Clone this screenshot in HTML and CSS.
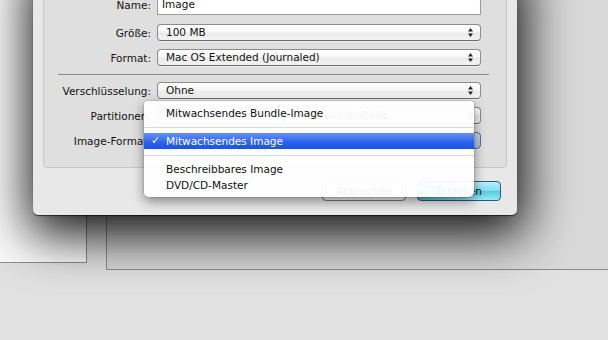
FILE: index.html
```html
<!DOCTYPE html>
<html lang="de">
<head>
<meta charset="utf-8">
<title>Neues Image</title>
<link rel="stylesheet" href="styles.css">
</head>
<body>
<div class="desktop">
  <div class="win win-left"></div>
  <div class="win win-right"></div>

  <div class="sheet">
    <div class="group">
      <div class="form">
        <div class="lbl">Name:</div>
        <div class="field">Image</div>

        <div class="lbl">Größe:</div>
        <div class="popup">100 MB<svg class="arrows" width="5" height="9" viewBox="0 0 5 9"><path d="M2.5 0L5 3.5H0Z M2.5 9L5 5.5H0Z" fill="#222"/></svg></div>

        <div class="lbl">Format:</div>
        <div class="popup">Mac OS Extended (Journaled)<svg class="arrows" width="5" height="9" viewBox="0 0 5 9"><path d="M2.5 0L5 3.5H0Z M2.5 9L5 5.5H0Z" fill="#222"/></svg></div>

        <div class="sep"></div>

        <div class="lbl">Verschlüsselung:</div>
        <div class="popup">Ohne<svg class="arrows" width="5" height="9" viewBox="0 0 5 9"><path d="M2.5 0L5 3.5H0Z M2.5 9L5 5.5H0Z" fill="#222"/></svg></div>

        <div class="lbl">Partitionen:</div>
        <div class="popup">Einzelne Partition – Apple-Partitionstabelle<svg class="arrows" width="5" height="9" viewBox="0 0 5 9"><path d="M2.5 0L5 3.5H0Z M2.5 9L5 5.5H0Z" fill="#222"/></svg></div>

        <div class="lbl">Image-Format:</div>
        <div class="popup active">Mitwachsendes Image<svg class="arrows" width="5" height="9" viewBox="0 0 5 9"><path d="M2.5 0L5 3.5H0Z M2.5 9L5 5.5H0Z" fill="#222"/></svg></div>
      </div>
    </div>
    <div class="buttons">
      <button class="btn">Abbrechen</button>
      <button class="btn default">Erstellen</button>
    </div>
  </div>

  <div class="menu">
    <div class="item">Mitwachsendes Bundle-Image</div>
    <div class="msep"></div>
    <div class="item sel"><span class="check">✓</span>Mitwachsendes Image</div>
    <div class="msep"></div>
    <div class="item">Beschreibbares Image</div>
    <div class="item">DVD/CD-Master</div>
  </div>
</div>
</body>
</html>
```

FILE: styles.css
```css
* { box-sizing: border-box; }
html, body { margin: 0; padding: 0; }
body {
  width: 608px;
  height: 340px;
  overflow: hidden;
  background: #e1e1e1;
  font-family: "DejaVu Sans", "Noto Sans", sans-serif;
  font-size: 10.5px;
  color: #111;
}
.desktop {
  position: relative;
  width: 608px;
  height: 340px;
  overflow: hidden;
  background: #e1e1e1;
}
.win {
  position: absolute;
  border: 1px solid #8d8d8d;
}
.win-left {
  left: -10px;
  top: -10px;
  width: 97px;
  height: 273px;
  background: #fbfbfb;
}
.win-right {
  left: 106px;
  top: -10px;
  width: 520px;
  height: 280px;
  background: #d9d9d9;
}

/* sheet */
.sheet {
  position: absolute;
  left: 33px;
  top: -40px;
  width: 484px;
  padding: 10px 10px 14px;
  background: #e8e8e8;
  border-radius: 0 0 5px 5px;
  box-shadow: 0 1px 1px rgba(0,0,0,.65), 2px 14px 50px 6px rgba(0,0,0,.93);
}
.group {
  background: #dfdfdf;
  border: 1px solid #c6c6c6;
  border-radius: 4px;
  padding: 23px 0 18px 0;
}
.form {
  display: grid;
  grid-template-columns: 107px 324px;
  column-gap: 6px;
  row-gap: 8px;
  align-items: center;
}
.lbl {
  text-align: right;
  white-space: nowrap;
  color: #111;
}
.field {
  height: 21px;
  margin-bottom: 1px;
  line-height: 19px;
  padding-left: 4px;
  background: #fff;
  border: 1px solid #9d9d9d;
  border-top-color: #858585;
  box-shadow: inset 0 1px 1px rgba(0,0,0,.12);
}
.popup {
  position: relative;
  height: 17px;
  line-height: 15px;
  padding-left: 8px;
  border: 1px solid #8c8c8c;
  border-bottom-color: #6c6c6c;
  border-radius: 4px;
  background: linear-gradient(#ffffff, #f7f7f7 45%, #ebebeb 55%, #f3f3f3);
  box-shadow: 0 1px 0 rgba(255,255,255,.5);
  white-space: nowrap;
  overflow: hidden;
}
.popup .arrows {
  position: absolute;
  right: 7px;
  top: 3px;
}
.popup.active {
  border-color: #5a6f94;
  background: linear-gradient(#c9d5ea, #a9bad8);
}
.sep {
  grid-column: 1 / -1;
  height: 1px;
  margin: 0 -8px -1px 14px;
  background: #8a8a8a;
}

/* buttons */
.buttons {
  display: flex;
  justify-content: flex-end;
  gap: 11px;
  margin-top: 13px;
  padding-right: 6px;
}
.btn {
  width: 84px;
  height: 20px;
  padding: 0;
  font: inherit;
  color: #111;
  border: 1px solid #7a7a7a;
  border-radius: 4px;
  background: linear-gradient(#ffffff, #f3f3f3 50%, #e3e3e3 51%, #f4f4f4);
}
.btn.default {
  border-color: #2c5a86;
  background:
    linear-gradient(to right, rgba(30,120,120,.4), rgba(255,255,255,0) 65%),
    linear-gradient(#b8f0fa, #80dff0 48%, #55cadd 52%, #9aeaf7);
}

/* popup menu */
.menu {
  position: absolute;
  left: 144px;
  top: 101px;
  width: 330px;
  padding: 4px 0;
  background: rgba(255,255,255,.95);
  border-radius: 4px 4px 5px 5px;
  box-shadow: 0 4px 12px rgba(0,0,0,.45), 0 0 0 1px rgba(0,0,0,.08);
}
.item {
  position: relative;
  height: 16px;
  line-height: 16px;
  padding-left: 22px;
  color: #111;
  white-space: nowrap;
}
.item.sel {
  color: #fff;
  background: linear-gradient(#6592f5, #2a62ee 60%, #1953e6);
}
.check {
  position: absolute;
  left: 7px;
  top: 0;
  font-weight: bold;
  font-size: 11px;
}
.msep {
  height: 12px;
  display: flex;
  align-items: center;
}
.msep::before {
  content: "";
  flex: 1;
  height: 1px;
  background: #dadada;
}
```
